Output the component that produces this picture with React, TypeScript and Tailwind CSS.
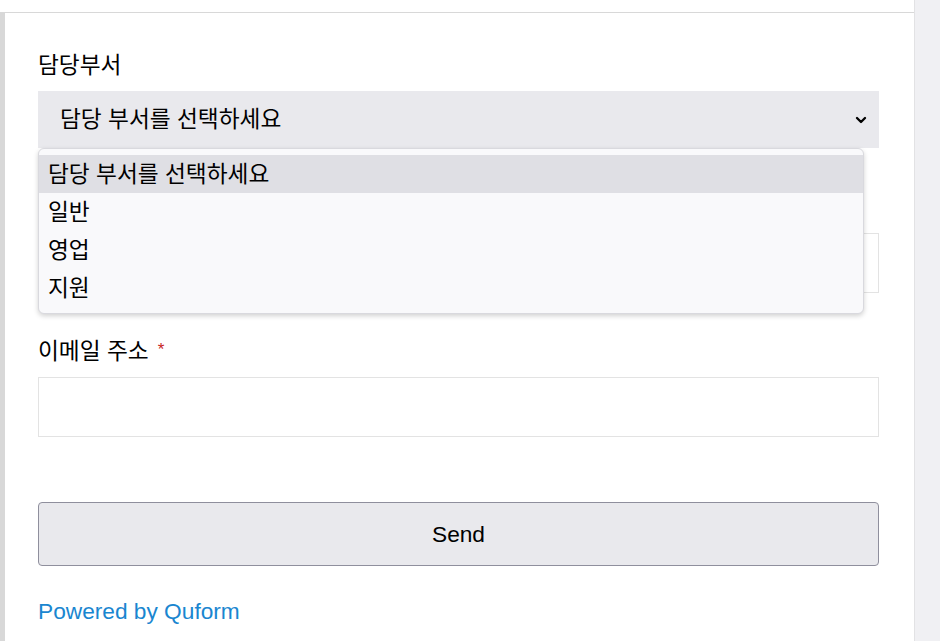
import { ChevronDown } from 'lucide-react';

const OPTIONS = ['담당 부서를 선택하세요', '일반', '영업', '지원'];

function Label({ text, required }: { text: string; required?: boolean }) {
  return (
    <div className="mb-[12px] flex h-[28px] items-center text-[22.7px] leading-[28px] text-black">
      <span>{text}</span>
      {required && <span className="ml-[9px] -mt-[4px] text-[17px] leading-none text-[#c81e1e]">*</span>}
    </div>
  );
}

export default function App() {
  return (
    <div
      className="flex h-[641px] w-[940px] overflow-hidden bg-white"
      style={{ fontFamily: '"Liberation Sans", "Noto Sans CJK KR", sans-serif' }}
    >
      <div className="flex flex-1 flex-col">
        <div className="h-[13px] border-b border-[#d8d8d8]" />
        <div className="flex flex-1">
          <div className="w-[5px] bg-[#d8d8d8]" />
          <div className="flex-1 pl-[33px] pr-[35px] pt-[38px]">
            {/* 담당부서 */}
            <div className="relative">
              <Label text="담당부서" />
              <div className="flex h-[57px] items-center justify-between bg-[#e9e9ed] pl-[22px] pr-[10px] text-[22.7px] text-black">
                <span>담당 부서를 선택하세요</span>
                <ChevronDown className="h-[16px] w-[16px]" strokeWidth={3.5} />
              </div>

              <div className="absolute left-0 top-full z-10 w-[826px] rounded-[6px] border border-[#d9d9de] bg-[#f9f9fb] py-[6px] shadow-[0_2px_5px_rgba(0,0,0,0.18)]">
                {OPTIONS.map((opt, i) => (
                  <div
                    key={opt}
                    className={`flex h-[38px] items-center px-[9px] text-[22.7px] text-black ${i === 0 ? 'bg-[#dfdfe4]' : ''}`}
                  >
                    {opt}
                  </div>
                ))}
              </div>
            </div>

            {/* field hidden behind the open list */}
            <div className="mt-[45px]">
              <div className="mb-[12px] h-[28px]" />
              <div className="h-[60px] border border-[#e3e3e3] bg-white" />
            </div>

            {/* 이메일 주소 */}
            <div className="mt-[44px]">
              <Label text="이메일 주소" required />
              <div className="h-[60px] border border-[#e3e3e3] bg-white" />
            </div>

            <button className="mt-[65px] flex h-[64px] w-full items-center justify-center rounded-[4px] border border-[#8f8f9d] bg-[#e9e9ed] text-[22.7px] text-black">
              Send
            </button>

            <div className="mt-[31px] h-[28px] text-[22.7px] leading-[28px] text-[#1a86d0]">Powered by Quform</div>
          </div>
        </div>
      </div>
      <div className="w-[26px] border-l border-[#e2e2e4] bg-[#f0f0f3]" />
    </div>
  );
}
